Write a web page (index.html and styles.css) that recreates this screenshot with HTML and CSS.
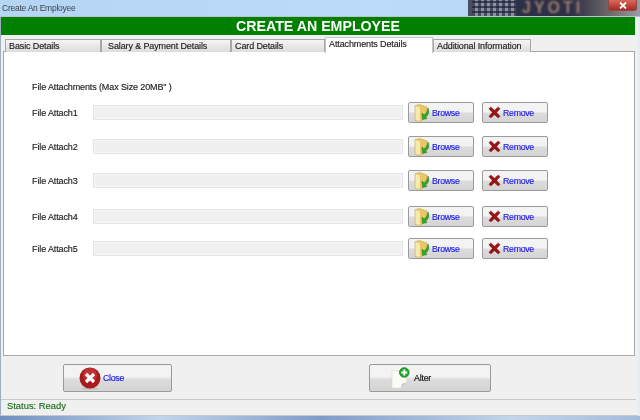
FILE: index.html
```html
<!DOCTYPE html>
<html lang="en">
<head>
<meta charset="utf-8">
<title>Create An Employee</title>
<link rel="stylesheet" href="styles.css">
</head>
<body>
<svg class="defs" width="0" height="0" aria-hidden="true">
  <defs>
    <symbol id="folder" viewBox="0 0 16 18">
      <path d="M1 1.500 L6 .5 L10 2 L13 3 L13 13 L6 17.500 L1 16.500 Z" fill="#e9c766" stroke="#c9a94f" stroke-width=".6"/>
      <path d="M1.500 2 L6 3.500 L6 17 L1.500 16 Z" fill="#f8e9ae"/>
      <path d="M8 11 L8.500 15.500 L13 14.500 L11.500 13 C14.500 11 16 8 14 4 C13.500 7.500 12 9.500 10 11 L8 9 Z" fill="#35a52f" stroke="#1e7f1e" stroke-width=".5"/>
    </symbol>
    <symbol id="cross" viewBox="0 0 14 14">
      <path d="M1 3 L3 1 L7 4.600 L11 1 L13 3 L9.400 7 L13 11 L11 13 L7 9.400 L3 13 L1 11 L4.600 7 Z" fill="#9b1518" stroke="#6d0c0e" stroke-width=".4"/>
    </symbol>
  </defs>
</svg>
<div class="window">
  <div class="titlebar">
    <span class="title">Create An Employee</span>
    <div class="photo"><span class="photo-text">JYOTI</span></div>
    <div class="closebox">
      <svg width="8" height="7" viewBox="0 0 8 7"><path d="M1 .5 L7 6.500 M7 .5 L1 6.500" stroke="#fff" stroke-width="1.800"/></svg>
    </div>
  </div>
  <div class="client">
    <h1 class="banner">CREATE AN EMPLOYEE</h1>
    <div class="tabs">
      <div class="tab tab-basic">Basic Details</div>
      <div class="tab tab-salary">Salary &amp; Payment Details</div>
      <div class="tab tab-card">Card Details</div>
      <div class="tab tab-active">Attachments Details</div>
      <div class="tab tab-info">Additional Information</div>
    </div>
    <div class="panel">
      <p class="heading">File Attachments (Max Size 20MB" )</p>
      <div class="row">
        <span class="label">File Attach1</span><div class="field"></div>
        <button class="btn browse"><svg width="16" height="18"><use href="#folder"/></svg>Browse</button>
        <button class="btn remove"><svg width="13" height="13"><use href="#cross"/></svg>Remove</button>
      </div>
      <div class="row">
        <span class="label">File Attach2</span><div class="field"></div>
        <button class="btn browse"><svg width="16" height="18"><use href="#folder"/></svg>Browse</button>
        <button class="btn remove"><svg width="13" height="13"><use href="#cross"/></svg>Remove</button>
      </div>
      <div class="row row-3">
        <span class="label">File Attach3</span><div class="field"></div>
        <button class="btn browse"><svg width="16" height="18"><use href="#folder"/></svg>Browse</button>
        <button class="btn remove"><svg width="13" height="13"><use href="#cross"/></svg>Remove</button>
      </div>
      <div class="row row-4">
        <span class="label">File Attach4</span><div class="field"></div>
        <button class="btn browse"><svg width="16" height="18"><use href="#folder"/></svg>Browse</button>
        <button class="btn remove"><svg width="13" height="13"><use href="#cross"/></svg>Remove</button>
      </div>
      <div class="row">
        <span class="label">File Attach5</span><div class="field"></div>
        <button class="btn browse"><svg width="16" height="18"><use href="#folder"/></svg>Browse</button>
        <button class="btn remove"><svg width="13" height="13"><use href="#cross"/></svg>Remove</button>
      </div>
    </div>
    <div class="actions">
      <button class="btn big close">
        <svg width="22" height="23" viewBox="0 0 22 23">
          <ellipse cx="11" cy="21.500" rx="9" ry="1.200" fill="#bbb"/>
          <circle cx="11" cy="11" r="10.500" fill="#a81a1c"/>
          <circle cx="11" cy="8" r="7" fill="#d8474a" opacity=".5"/>
          <path d="M7 7 L15 15 M15 7 L7 15" stroke="#fff" stroke-width="3.200"/>
        </svg>Close
      </button>
      <button class="btn big alter">
        <svg width="22" height="24" viewBox="0 0 24 24">
          <path d="M1 4 H17 V17 L11 23 H1 Z" fill="#fbfbf6" stroke="#d5d5d0" stroke-width=".6"/>
          <path d="M17 17 L11 23 L12 18 Z" fill="#c8c8c2"/>
          <circle cx="14.500" cy="6" r="5.300" fill="#2aa52f" stroke="#137f1c" stroke-width=".8"/>
          <path d="M14.500 2.800 V9.200 M11.300 6 H17.700" stroke="#fff" stroke-width="2"/>
        </svg>Alter
      </button>
    </div>
    <div class="status">Status: Ready</div>
  </div>
  <div class="taskbar"></div>
</div>
</body>
</html>
```
FILE: styles.css
```css
html, body { margin: 0; padding: 0; }
body {
  width: 640px;
  height: 420px;
  overflow: hidden;
  font-family: "Liberation Sans", Arial, sans-serif;
  font-size: 9px;
  letter-spacing: -.12px;
  color: #222;
  background: #f0f0f0;
}
.defs { position: absolute; }
.window {
  width: 640px;
  height: 420px;
  display: flex;
  flex-direction: column;
  background: #e4ecf4;
  filter: blur(.3px);
  -webkit-text-stroke: .15px currentColor;
}
.titlebar {
  height: 17px;
  flex: none;
  display: flex;
  align-items: center;
  background: linear-gradient(90deg, #b5d5f5, #bcdafa 60%, #b4d6f8);
  position: relative;
  padding-left: 2px;
  border-bottom: 1px solid #b9c4cf;
  box-sizing: border-box;
}
.title { color: #3f444a; font-size: 8.500px; letter-spacing: -.25px; -webkit-text-stroke: 0; }
.photo {
  position: absolute;
  left: 468px; top: 0;
  width: 172px; height: 16px;
  overflow: hidden;
  background:
    repeating-linear-gradient(0deg, transparent 0 3px, rgba(30, 35, 60, .7) 3px 5px) 4px 0 / 44px 16px no-repeat,
    repeating-linear-gradient(90deg, #454c63 0 3px, #8f9099 3px 6px) 4px 0 / 44px 16px no-repeat,
    linear-gradient(90deg, #4b4f63, #2b2f47 30%, #2e2f44 60%, #766e6e 85%, #9a9ca8);
}
.photo-text {
  position: absolute;
  left: 54px; top: 0;
  font-size: 16px;
  line-height: 16px;
  letter-spacing: 3px;
  font-weight: bold;
  color: #9b7f70;
  -webkit-text-stroke: 0;
  filter: blur(1.200px);
}
.closebox {
  position: absolute;
  right: 3px; top: 0;
  width: 29px; height: 11px;
  border-radius: 0 0 3px 3px;
  background: linear-gradient(#d9685c, #a92a20);
  border: 1px solid #8c4a44;
  border-top: 0;
  box-sizing: border-box;
  display: flex;
  align-items: center;
  justify-content: center;
}
.client {
  flex: none;
  height: 399px;
  width: 638px;
  border-left: 1px solid #9db0c2;
  border-bottom: 1px solid #c8c8c8;
  background: #f0f0f0;
  display: flex;
  flex-direction: column;
  box-sizing: border-box;
}
.banner {
  margin: 0;
  width: 634px;
  height: 18px;
  background: #008000;
  color: #fff;
  font-size: 14.200px;
  letter-spacing: 0;
  font-weight: bold;
  line-height: 18px;
  text-align: center;
  flex: none;
  -webkit-text-stroke: 0;
}
.tabs {
  display: flex;
  align-items: flex-end;
  height: 15px;
  margin-top: 2px;
  padding-left: 4px;
  flex: none;
  position: relative;
  z-index: 1;
}
.tab {
  height: 13px;
  line-height: 12px;
  box-sizing: border-box;
  background: linear-gradient(#f5f5f5, #dcdcdc);
  border: 1px solid #a8a8a8;
  border-bottom: 0;
  padding-left: 3px;
  flex: none;
}
.tab-basic { width: 96px; }
.tab-salary { width: 130px; padding-left: 6px; }
.tab-card { width: 94px; }
.tab-active { width: 108px; height: 16px; line-height: 12px; background: #fff; border-color: #c4c4c4; margin-bottom: -1px; }
.tab-info { width: 98px; }
.panel {
  height: 305px;
  margin: -1px 0 0 2px;
  width: 632px;
  box-sizing: border-box;
  flex: none;
  background: #fff;
  border: 1px solid #a8a8a8;
  padding: 29px 0 0 28px;
}
.heading { margin: 0 0 9px; height: 12px; line-height: 12px; }
.row { display: flex; align-items: center; height: 21px; margin-bottom: 13px; }
.row-3 { margin-bottom: 15px; }
.row-4 { margin-bottom: 11px; }
.label { width: 61px; flex: none; }
.field {
  width: 310px;
  height: 15px;
  box-sizing: border-box;
  flex: none;
  background: #f0f0f0;
  border: 1px solid #e4e4e4;
  box-shadow: inset 0 0 0 1px #f6f6f6;
}
.btn {
  font: inherit;
  font-size: 8.800px;
  letter-spacing: -.3px;
  box-sizing: border-box;
  display: flex;
  align-items: center;
  padding: 0;
  cursor: default;
  color: #1a1aee;
  border: 1px solid #9a9a9a;
  border-radius: 2px;
  background: linear-gradient(#f3f3f3 0 45%, #dcdcdc 55%, #d4d4d4);
}
.browse { width: 66px; height: 21px; margin-left: 5px; padding-left: 5px; gap: 2px; }
.remove { width: 66px; height: 21px; margin-left: 8px; padding-left: 5px; gap: 2px; }
.actions { height: 43px; flex: none; display: flex; align-items: flex-start; padding-top: 8px; box-sizing: border-box; }
.big { height: 28px; }
.close { width: 109px; margin-left: 62px; padding-left: 15px; gap: 2px; letter-spacing: -.3px; }
.alter { width: 122px; margin-left: 197px; padding-left: 21px; gap: 1px; color: #111; letter-spacing: -.2px; }
.status {
  height: 16px;
  flex: none;
  width: 635px;
  border-top: 1px solid #c9c9c9;
  box-sizing: border-box;
  color: #1f6f1f;
  padding-left: 6px;
  line-height: 11px;
  font-size: 9.400px;
  letter-spacing: 0;
}
.taskbar { flex: 1; background: linear-gradient(90deg, #6f8fc0, #c2d5ea 25%, #7f9cc9 50%, #c2d5ea 80%, #a3bcdc); }
```
